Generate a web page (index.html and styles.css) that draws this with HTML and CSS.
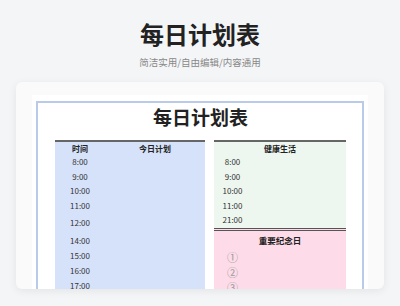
FILE: index.html
```html
<!DOCTYPE html>
<html lang="zh">
<head>
<meta charset="utf-8">
<title>每日计划表</title>
<link rel="stylesheet" href="styles.css">
</head>
<body>
<header class="page-head">
  <h1 class="page-title">每日计划表</h1>
  <p class="page-sub">简洁实用/自由编辑/内容通用</p>
</header>
<main class="card">
  <div class="sheet">
    <div class="frame">
      <h2 class="sheet-title">每日计划表</h2>
      <div class="tables">
        <section class="plan">
          <div class="row head"><span class="time">时间</span><span class="task">今日计划</span></div>
          <div class="row"><span class="time">8:00</span><span class="task"></span></div>
          <div class="row"><span class="time">9:00</span><span class="task"></span></div>
          <div class="row"><span class="time">10:00</span><span class="task"></span></div>
          <div class="row"><span class="time">11:00</span><span class="task"></span></div>
          <div class="row noon"><span class="time">12:00</span><span class="task"></span></div>
          <div class="row pm"><span class="time">14:00</span><span class="task"></span></div>
          <div class="row pm"><span class="time">15:00</span><span class="task"></span></div>
          <div class="row pm"><span class="time">16:00</span><span class="task"></span></div>
          <div class="row pm"><span class="time">17:00</span><span class="task"></span></div>
        </section>
        <div class="side">
          <section class="health">
            <div class="row head"><span class="full">健康生活</span></div>
            <div class="row"><span class="stime">8:00</span></div>
            <div class="row"><span class="stime">9:00</span></div>
            <div class="row"><span class="stime">10:00</span></div>
            <div class="row"><span class="stime">11:00</span></div>
            <div class="row"><span class="stime">21:00</span></div>
          </section>
          <section class="memo">
            <div class="row memo-head"><span class="full">重要纪念日</span></div>
            <div class="row mrow"><span class="num">①</span></div>
            <div class="row mrow"><span class="num">②</span></div>
            <div class="row mrow"><span class="num">③</span></div>
          </section>
        </div>
      </div>
    </div>
  </div>
</main>
</body>
</html>
```
FILE: styles.css
```css
* { box-sizing: border-box; }
html, body { margin: 0; padding: 0; }
body {
  width: 400px;
  height: 306px;
  overflow: hidden;
  background: #f4f5f7;
  font-family: "Noto Sans CJK SC", "Noto Sans", sans-serif;
  color: #333;
}
.page-head {
  padding-top: 19px;
  text-align: center;
}
.page-title {
  margin: 0;
  font-size: 24px;
  line-height: 30px;
  font-weight: 700;
  color: #222;
}
.page-sub {
  margin: 6px 0 0;
  font-size: 9.5px;
  line-height: 14px;
  color: #888;
}
.card {
  display: block;
  margin: 13px 16px 0;
  height: 207px;
  padding: 13px 16px 0;
  background: #fafafb;
  border-radius: 6px;
  box-shadow: 0 2px 8px rgba(0, 0, 0, 0.07);
  overflow: hidden;
}
.sheet {
  background: #fff;
  padding: 6px 4px 0;
  height: 260px;
}
.frame {
  border: 2px solid #b9cbe9;
  padding: 2px 16px 0 17px;
  height: 260px;
}
.sheet-title {
  margin: 0;
  text-align: center;
  font-size: 19px;
  line-height: 24px;
  font-weight: 700;
  color: #222;
}
.tables {
  margin-top: 11px;
  display: grid;
  grid-template-columns: 150px 132px;
  column-gap: 9px;
  align-items: start;
}
.plan {
  background: #d6e2fa;
  border-top: 2px solid #666;
  height: 200px;
}
.row {
  display: flex;
  align-items: center;
  height: 14.5px;
  font-size: 8px;
  line-height: 10px;
}
.row.head { height: 13px; font-weight: 700; color: #222; }
.row.noon { height: 20px; }
.row.pm { height: 15px; }
.time {
  width: 50px;
  text-align: center;
}
.task {
  flex: 1;
  text-align: center;
}
.health {
  background: #edf7ef;
  border-top: 2px solid #666;
}
.full {
  flex: 1;
  text-align: center;
}
.stime {
  width: 37px;
  text-align: center;
}
.memo {
  background: #fddbe8;
  border-top: 3px double #555;
  height: 100px;
}
.row.memo-head {
  height: 19px;
  font-weight: 700;
  color: #222;
  font-size: 8.5px;
}
.row.mrow { height: 15px; }
.num {
  width: 37px;
  text-align: center;
  font-size: 11px;
  line-height: 12px;
  color: #999;
}
```
